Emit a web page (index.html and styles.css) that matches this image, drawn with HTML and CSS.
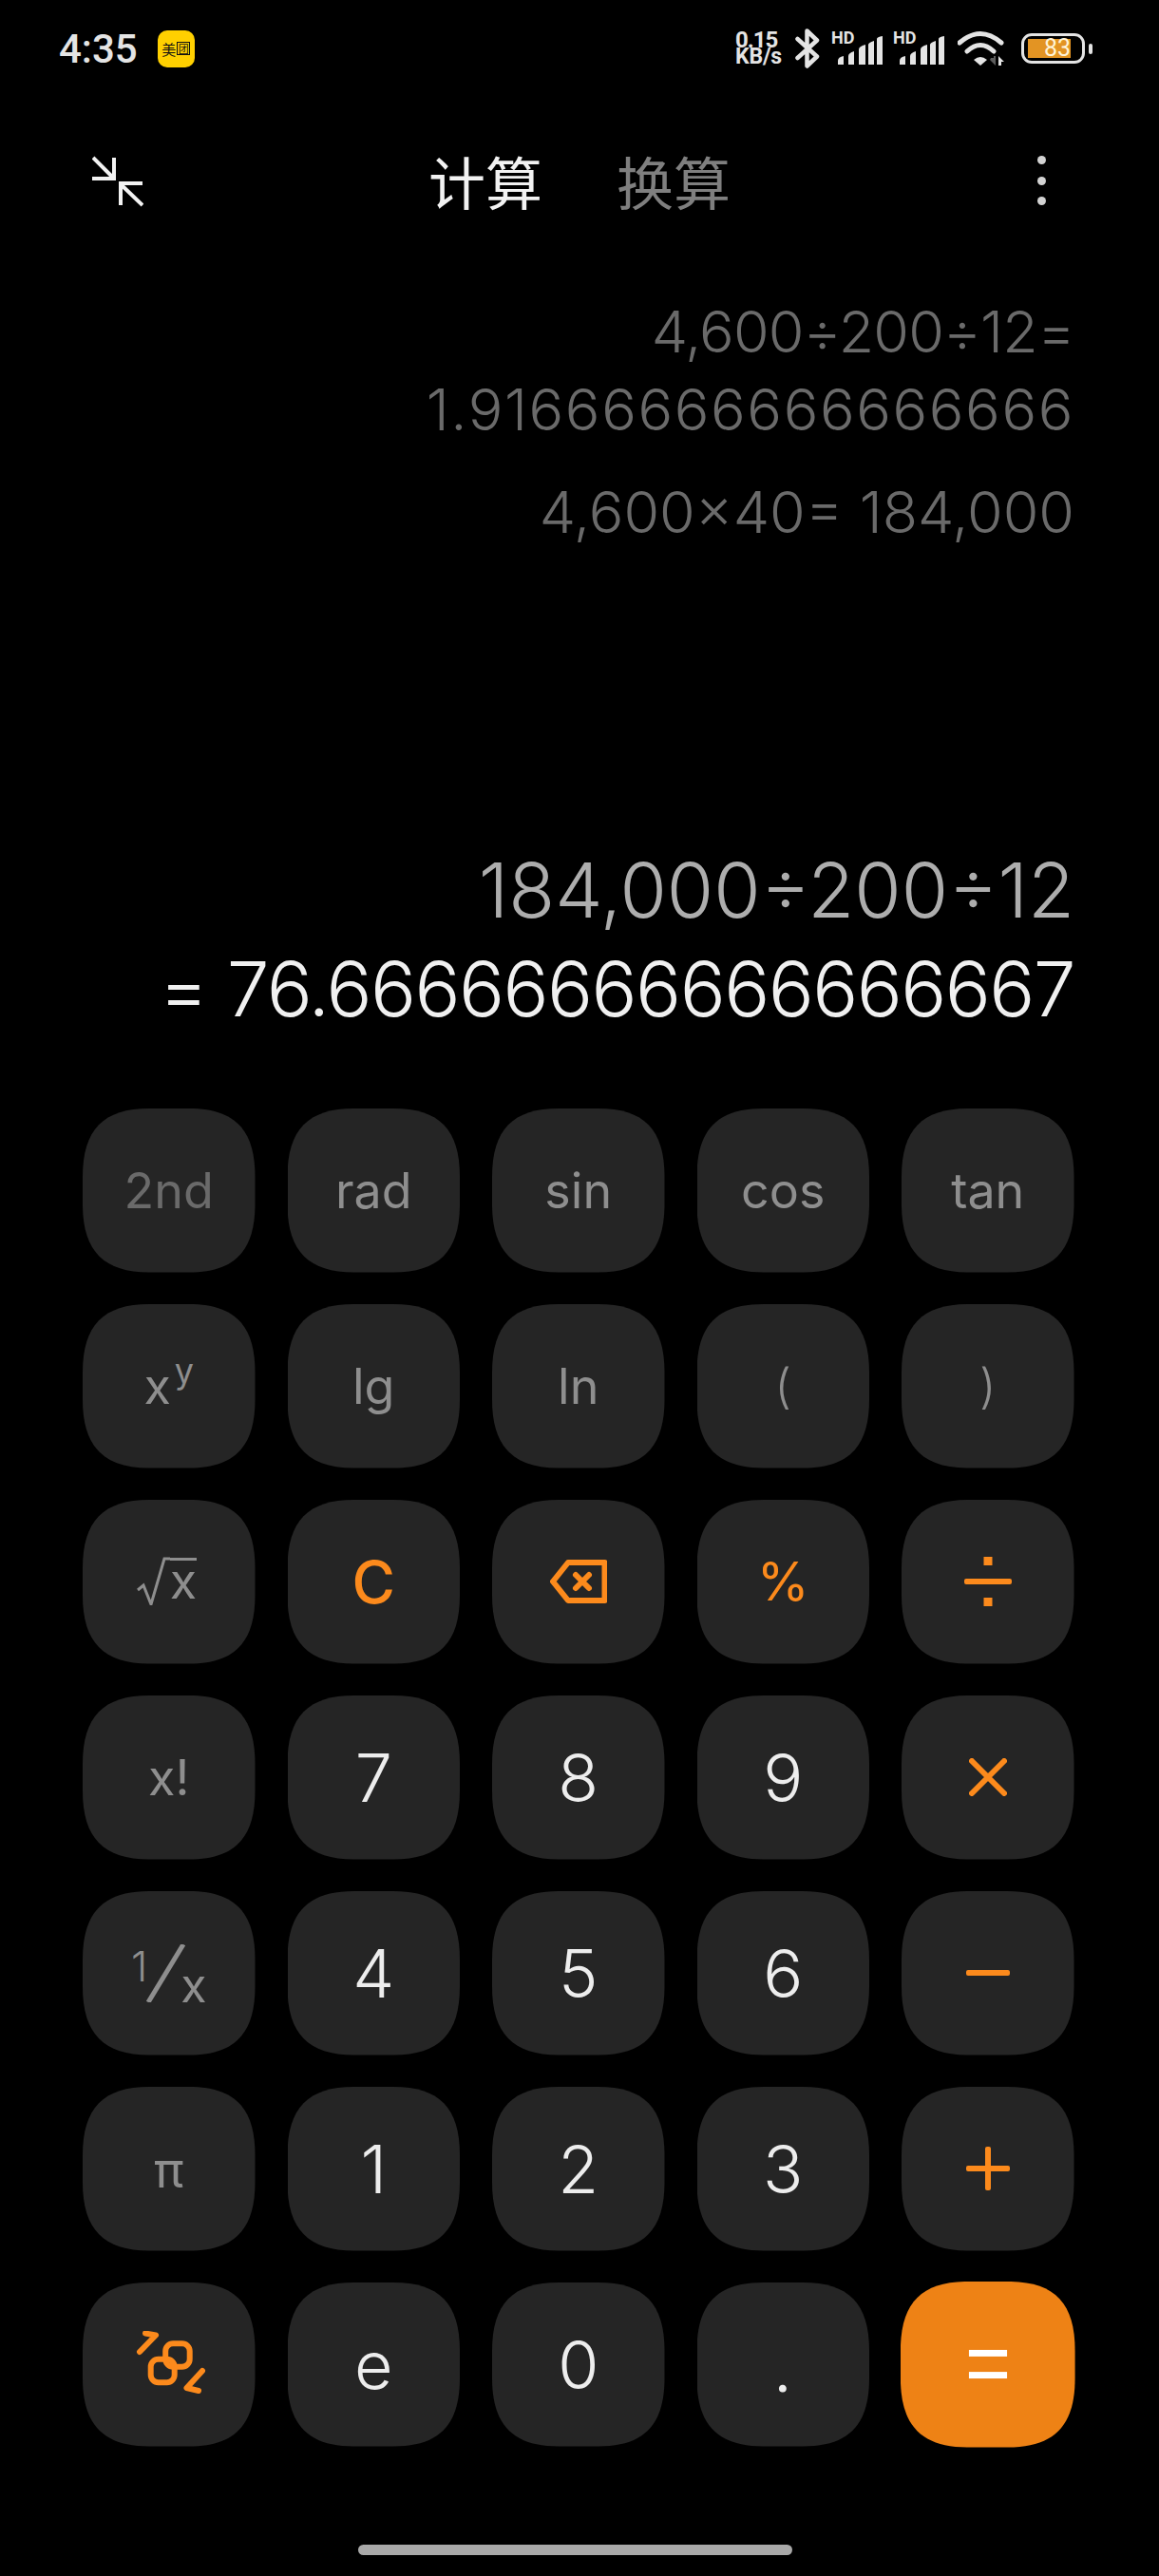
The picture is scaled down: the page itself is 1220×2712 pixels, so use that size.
FILE: index.html
```html
<!DOCTYPE html>
<html lang="zh">
  <head>
    <meta charset="utf-8">
    <title>计算器</title>
    <link rel="stylesheet" href="styles.css">
  </head>
  <body>
    <div class="phone">
      <div class="status-bar">
        <span class="time">4:35</span>
        <span class="app-badge"><span>美</span><span class="boxed">团</span></span>
        <div class="status-icons">
          <div class="net-speed"><span class="speed-value">0.15</span><span>KB/s</span></div>
          <svg class="bluetooth" width="26" height="42" viewBox="0 0 26 42">
            <path d="M2.5 11 L23 29.5 L12.5 39.5 V2.5 L23 12.5 L2.5 31" />
          </svg>
          <div class="signal">
            <span class="hd">HD</span>
            <svg width="47" height="30" viewBox="0 0 47 30">
              <path d="M0 30 V26 Q0 22 6 21 V30 Z" />
              <path d="M11 30 V21 Q11 18 17 16 V30 Z" />
              <path d="M22 30 V14 Q22 11 29 9 V30 Z" />
              <path d="M32 30 V9 Q32 7 38 5 V30 Z" />
              <path d="M41 30 V3 Q41 1 47 0 V30 Z" />
            </svg>
          </div>
          <div class="signal">
            <span class="hd">HD</span>
            <svg width="47" height="30" viewBox="0 0 47 30">
              <path d="M0 30 V26 Q0 22 6 21 V30 Z" />
              <path d="M11 30 V21 Q11 18 17 16 V30 Z" />
              <path d="M22 30 V14 Q22 11 29 9 V30 Z" />
              <path d="M32 30 V9 Q32 7 38 5 V30 Z" />
              <path d="M41 30 V3 Q41 1 47 0 V30 Z" />
            </svg>
          </div>
          <svg class="wifi" width="50" height="38" viewBox="0 0 50 38">
            <path class="wave" d="M2 13 Q24 -6 46 13" />
            <path class="wave" d="M10 22 Q24 9 38 22" />
            <path class="wedge" d="M17 31 Q24 25 31 31 L24 37 Z" />
            <path class="arrow-down" d="M35 29 H38 V27 H40 V37 L34 31 Z" />
            <path class="wedge" d="M43 37 V27 L49 33 H46 V37 Z" />
          </svg>
          <div class="battery">
            <div class="battery-body"><span class="battery-level">83</span></div>
            <span class="battery-cap"></span>
          </div>
        </div>
      </div>

      <div class="nav">
        <svg class="collapse" width="54" height="55" viewBox="0 0 54 55">
          <path d="M1 3 L23 25 M23 3 V25 H0" />
          <path d="M53 53 L30 31 M30 53 V30 H53" />
        </svg>
        <div class="tabs">
          <span class="tab active">计算</span>
          <span class="tab">换算</span>
        </div>
        <div class="more"><span></span><span></span><span></span></div>
      </div>

      <div class="display">
        <div class="history">
          <div class="history-line history-tight">4,600÷200÷12=</div>
          <div class="history-line history-wide">1.91666666666666666</div>
          <div class="history-line history-gap">4,600×40= 184,000</div>
        </div>
        <div class="current">
          <div class="expression">184,000÷200÷12</div>
          <div class="result">= 76.66666666666666667</div>
        </div>
      </div>

      <div class="keypad">
        <button class="key fn dim">2nd</button>
        <button class="key fn">rad</button>
        <button class="key fn">sin</button>
        <button class="key fn">cos</button>
        <button class="key fn">tan</button>

        <button class="key fn"><span>x<sup class="power">y</sup></span></button>
        <button class="key fn">lg</button>
        <button class="key fn">ln</button>
        <button class="key fn paren">(</button>
        <button class="key fn paren">)</button>

        <button class="key fn">
          <span class="root">
            <svg width="35" height="51" viewBox="0 0 35 51"><path d="M1 35 L7 30 L15 50 L29 2 H35" /></svg>
            <span class="radicand">x</span>
          </span>
        </button>
        <button class="key op-text clear">C</button>
        <button class="key" aria-label="delete">
          <svg class="icon-line" width="60" height="46" viewBox="0 0 60 46">
            <path d="M3 23 L19 3 H57.5 V43 H19 Z" />
            <path d="M27 16 L41 30 M41 16 L27 30" />
          </svg>
        </button>
        <button class="key op-text percent">%</button>
        <button class="key" aria-label="divide">
          <svg class="icon-fill" width="50" height="52" viewBox="0 0 50 52">
            <rect x="20.5" y="0" width="9" height="9" />
            <rect x="0" y="23" width="50" height="6" rx="2" />
            <rect x="20.5" y="43" width="9" height="9" />
          </svg>
        </button>

        <button class="key fn">x!</button>
        <button class="key num">7</button>
        <button class="key num">8</button>
        <button class="key num">9</button>
        <button class="key" aria-label="multiply">
          <svg class="icon-line" width="40" height="40" viewBox="0 0 40 40">
            <path d="M3 3 L37 37 M37 3 L3 37" />
          </svg>
        </button>

        <button class="key fn">
          <span class="inverse">
            <span class="inverse-one">1</span>
            <svg width="42" height="61" viewBox="0 0 42 61"><path d="M3 61 L40 0" /></svg>
            <span class="inverse-x">x</span>
          </span>
        </button>
        <button class="key num">4</button>
        <button class="key num">5</button>
        <button class="key num">6</button>
        <button class="key" aria-label="minus">
          <svg class="icon-fill" width="46" height="6" viewBox="0 0 46 6"><rect width="46" height="6" rx="2" /></svg>
        </button>

        <button class="key fn pi">π</button>
        <button class="key num">1</button>
        <button class="key num">2</button>
        <button class="key num">3</button>
        <button class="key" aria-label="plus">
          <svg class="icon-fill" width="46" height="46" viewBox="0 0 46 46">
            <rect y="20" width="46" height="6" rx="2" />
            <rect x="20" width="6" height="46" rx="2" />
          </svg>
        </button>

        <button class="key" aria-label="switch">
          <svg class="swap" width="80" height="70" viewBox="0 0 80 70">
            <rect x="36.2" y="13.2" width="25.5" height="24.5" rx="8" />
            <rect x="20.7" y="29.7" width="25" height="24.5" rx="8" />
            <path d="M9 22 L26 4.5 L15 2.5" />
            <path d="M75 42 L58.5 60 L71 63" />
          </svg>
        </button>
        <button class="key num">e</button>
        <button class="key num">0</button>
        <button class="key num dot">.</button>
        <button class="key equals" aria-label="equals">
          <svg width="40" height="30" viewBox="0 0 40 30">
            <rect width="40" height="7" />
            <rect y="23" width="40" height="7" />
          </svg>
        </button>
      </div>

      <div class="home-bar"></div>
    </div>
  </body>
</html>
```

FILE: styles.css
```css
* {
  box-sizing: border-box;
}
body {
  margin: 0;
  background: #000;
}
.phone {
  width: 1220px;
  height: 2712px;
  display: flex;
  flex-direction: column;
  background: #000;
  font-family: Inter, "Noto Sans CJK SC", sans-serif;
  overflow: hidden;
}

/* status bar */
.status-bar {
  height: 102px;
  display: flex;
  align-items: center;
  padding: 0 70px 0 62px;
  color: #e4e4e4;
  font-family: Roboto, sans-serif;
}
.time {
  font-size: 42px;
  font-weight: 500;
}
.app-badge {
  width: 39px;
  height: 39px;
  margin-left: 21px;
  display: flex;
  align-items: center;
  justify-content: center;
  gap: 1px;
  background: #ffd000;
  border-radius: 10px;
  color: #111;
  font-family: "Noto Sans CJK SC", sans-serif;
  font-size: 15px;
  line-height: 1;
}
.boxed {
  border: 1px solid #111;
  font-size: 11px;
  width: 14px;
  height: 14px;
  text-align: center;
  line-height: 12px;
}
.status-icons {
  margin-left: auto;
  display: flex;
  align-items: center;
}
.net-speed {
  width: 51px;
  display: flex;
  flex-direction: column;
  font-size: 23px;
  font-weight: 700;
  line-height: 18px;
  letter-spacing: -0.2px;
}
.speed-value {
  letter-spacing: -1px;
  font-size: 24px;
}
.bluetooth {
  margin-left: 12px;
  fill: none;
  stroke: #e4e4e4;
  stroke-width: 4.5;
  stroke-linejoin: round;
  stroke-linecap: round;
}
.signal {
  width: 54px;
  height: 34px;
  margin-left: 12px;
  position: relative;
  display: flex;
  justify-content: flex-end;
  align-items: flex-end;
  fill: #e4e4e4;
}
.signal + .signal {
  margin-left: 11px;
}
.hd {
  position: absolute;
  left: 0;
  top: -1px;
  font-size: 18px;
  font-weight: 700;
  line-height: 14px;
}
.signal svg {
  display: block;
}
.wifi {
  margin-left: 14px;
  fill: none;
}
.wave {
  stroke: #e4e4e4;
  stroke-width: 5;
  stroke-linecap: round;
}
.wedge {
  fill: #e4e4e4;
}
.arrow-down {
  fill: #5c5c5c;
}
.battery {
  margin-left: 17px;
  display: flex;
  align-items: center;
  gap: 4px;
}
.battery-body {
  width: 67px;
  height: 32px;
  padding: 3px 12px 3px 4px;
  border: 3px solid #e4e4e4;
  border-radius: 11px;
}
.battery-level {
  display: block;
  height: 20px;
  background: #e39423;
  color: #fff4d8;
  font-size: 25px;
  line-height: 20px;
  text-align: right;
}
.battery-cap {
  width: 4px;
  height: 11px;
  background: #e4e4e4;
  border-radius: 2px;
}

/* title row */
.nav {
  height: 76px;
  margin-top: 50px;
  padding: 0 97px;
  display: flex;
  align-items: center;
  justify-content: space-between;
}
.collapse {
  fill: none;
  stroke: #f2f2f2;
  stroke-width: 4;
}
.tabs {
  display: flex;
  gap: 78px;
  font-family: "Noto Sans CJK SC", sans-serif;
  font-size: 60px;
  line-height: 76px;
  color: #7f7f7f;
}
.tab.active {
  color: #f2f2f2;
}
.more {
  width: 54px;
  display: flex;
  flex-direction: column;
  align-items: center;
  gap: 12.5px;
}
.more span {
  width: 9px;
  height: 9px;
  background: #d2d2d2;
  border-radius: 50%;
}

/* display */
.display {
  height: 939px;
  padding: 80px 89px 0 0;
  display: flex;
  flex-direction: column;
  justify-content: space-between;
  text-align: right;
  font-weight: 300;
  white-space: nowrap;
}
.history-line {
  color: #6a6a6a;
  font-size: 61px;
  line-height: 82px;
}
.history-tight {
  letter-spacing: -0.8px;
}
.history-wide {
  letter-spacing: 1.6px;
}
.history-gap {
  margin-top: 26px;
}
.current {
  font-size: 80px;
  font-weight: 350;
  line-height: 104px;
  margin-bottom: 74px;
}
.expression {
  color: #adadad;
}
.result {
  color: #f0f0f0;
  letter-spacing: -1.6px;
}

/* keys */
.keypad {
  padding: 0 87px;
  display: grid;
  grid-template-columns: repeat(5, 181.5px);
  grid-template-rows: repeat(7, 172.5px);
  column-gap: 34px;
  row-gap: 33.5px;
}
.key {
  padding: 0;
  border: none;
  background: #252525;
  display: flex;
  align-items: center;
  justify-content: center;
  font-family: Inter, sans-serif;
  clip-path: path("M70 0 H111.5 C160 0 181.5 22 181.5 72 V100.5 C181.5 150 160 172.5 111.5 172.5 H70 C22 172.5 0 150 0 100.5 V72 C0 22 22 0 70 0 Z");
}
.fn {
  color: #8e8e8e;
  font-size: 52px;
  font-weight: 400;
}
.fn.dim {
  color: #6a6a6a;
}
.paren {
  font-size: 50px;
  font-weight: 300;
}
.num {
  color: #ededed;
  font-size: 70px;
  font-weight: 300;
}
.dot {
  font-weight: 400;
  font-family: Roboto, sans-serif;
  padding-top: 10px;
}
.op-text {
  color: #fc8a1c;
  font-size: 60px;
  font-weight: 400;
}
.clear {
  font-size: 62px;
  font-weight: 500;
}
.percent {
  font-size: 56px;
}
.pi {
  font-size: 52px;
  padding-top: 2px;
}
.power {
  font-size: 36px;
  line-height: 0;
  margin-left: 4px;
  vertical-align: 22px;
}
.root {
  display: flex;
  align-items: flex-start;
  margin-right: 5px;
}
.root svg {
  fill: none;
  stroke: #8e8e8e;
  stroke-width: 3;
  display: block;
}
.radicand {
  width: 28px;
  height: 51px;
  border-top: 3px solid #8e8e8e;
  margin-top: 1px;
  font-size: 52px;
  line-height: 44px;
  text-align: center;
}
.inverse {
  display: flex;
  align-items: flex-start;
  height: 61px;
}
.inverse svg {
  margin-left: -2px;
  fill: none;
  stroke: #8e8e8e;
  stroke-width: 5;
}
.inverse-one {
  font-size: 44px;
  line-height: 46px;
  font-weight: 300;
}
.inverse-x {
  margin-left: -5px;
  margin-top: 20px;
  font-size: 50px;
  line-height: 46px;
}
.icon-line {
  fill: none;
  stroke: #fc8a1c;
  stroke-width: 6;
  stroke-linejoin: round;
  stroke-linecap: round;
}
.icon-fill {
  fill: #fc8a1c;
}
.swap {
  fill: none;
  stroke: #fc8a1c;
  stroke-width: 6;
  stroke-linecap: round;
  stroke-linejoin: round;
}
.equals {
  background: #ee8215;
  fill: #fff;
  transform: scale(1.012);
}

.home-bar {
  width: 457px;
  height: 11px;
  margin: 103px 0 0 377px;
  background: #a8a8a8;
  border-radius: 6px;
}
```
